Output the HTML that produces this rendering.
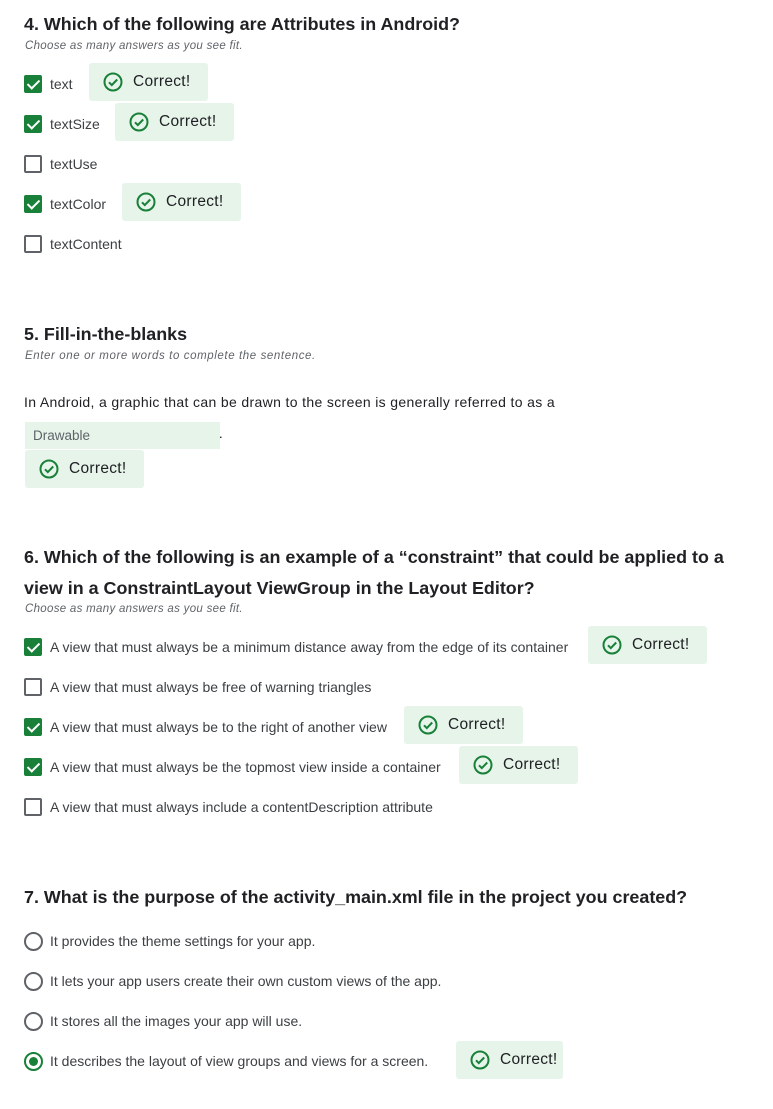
<!DOCTYPE html><html><head><meta charset="utf-8"><style>
body{margin:0;width:773px;height:1109px;background:#fff;position:relative;font-family:"Liberation Sans",sans-serif;overflow:hidden}
.a{position:absolute;white-space:nowrap}
.h{font-size:17.9px;font-weight:bold;color:#202124;line-height:31px}
.s{font-size:11.5px;font-style:italic;color:#5f6368;letter-spacing:0.3px}
.t{font-size:14px;color:#3c4043}
.cb{position:absolute;left:24px;width:18px;height:18px;box-sizing:border-box;border:2px solid #5f6368;border-radius:2px}
.cb.on{background:#188038;border-color:#188038}
.cb.on:after{content:"";position:absolute;left:4px;top:0px;width:5px;height:10px;border:solid #fff;border-width:0 2.5px 2.5px 0;transform:rotate(45deg)}
.rb{position:absolute;left:24px;width:19px;height:19px;box-sizing:border-box;border:2px solid #5f6368;border-radius:50%}
.rb.on{border-color:#188038}
.rb.on:after{content:"";position:absolute;left:3px;top:3px;width:9px;height:9px;border-radius:50%;background:#188038}
.bd{position:absolute;height:38px;width:119px;background:#e6f4ea;border-radius:3px;font-size:15.5px;color:#202124}
.bd svg{position:absolute;left:14px;top:9px}
.bd span{position:absolute;left:44px;top:10px;letter-spacing:0.3px}
</style></head><body>
<div class="a h" style="left:24px;top:9px">4. Which of the following are Attributes in Android?</div>
<div class="a s" style="left:25px;top:40px">Choose as many answers as you see fit.</div>
<div class="cb on" style="top:75px"></div><div class="a t" style="left:50px;top:76px">text</div>
<div class="cb on" style="top:115px"></div><div class="a t" style="left:50px;top:116px">textSize</div>
<div class="cb" style="top:155px"></div><div class="a t" style="left:50px;top:156px">textUse</div>
<div class="cb on" style="top:195px"></div><div class="a t" style="left:50px;top:196px">textColor</div>
<div class="cb" style="top:235px"></div><div class="a t" style="left:50px;top:236px">textContent</div>

<div class="a h" style="left:24px;top:319px">5. Fill-in-the-blanks</div>
<div class="a s" style="left:25px;top:350px;letter-spacing:0.6px">Enter one or more words to complete the sentence.</div>
<div class="a" style="left:24px;top:394px;color:#202124;font-size:14px;letter-spacing:0.35px">In Android, a graphic that can be drawn to the screen is generally referred to as a</div>
<div class="a" style="left:25px;top:422px;width:195px;height:27px;background:#e6f4ea"></div>
<div class="a" style="left:33px;top:428px;font-size:13.5px;color:#5f6368">Drawable</div>
<div class="a" style="left:219px;top:426px;font-size:13px">.</div>

<div class="a h" style="left:24px;top:542px">6. Which of the following is an example of a “constraint” that could be applied to a<br>view in a ConstraintLayout ViewGroup in the Layout Editor?</div>
<div class="a s" style="left:25px;top:603px">Choose as many answers as you see fit.</div>
<div class="cb on" style="top:638px"></div><div class="a t" style="left:50px;top:639px">A view that must always be a minimum distance away from the edge of its container</div>
<div class="cb" style="top:678px"></div><div class="a t" style="left:50px;top:679px">A view that must always be free of warning triangles</div>
<div class="cb on" style="top:718px"></div><div class="a t" style="left:50px;top:719px">A view that must always be to the right of another view</div>
<div class="cb on" style="top:758px"></div><div class="a t" style="left:50px;top:759px">A view that must always be the topmost view inside a container</div>
<div class="cb" style="top:798px"></div><div class="a t" style="left:50px;top:799px">A view that must always include a contentDescription attribute</div>

<div class="a h" style="left:24px;top:882px">7. What is the purpose of the activity_main.xml file in the project you created?</div>
<div class="rb" style="top:932px"></div><div class="a t" style="left:50px;top:933px">It provides the theme settings for your app.</div>
<div class="rb" style="top:972px"></div><div class="a t" style="left:50px;top:973px">It lets your app users create their own custom views of the app.</div>
<div class="rb" style="top:1012px"></div><div class="a t" style="left:50px;top:1013px">It stores all the images your app will use.</div>
<div class="rb on" style="top:1052px"></div><div class="a t" style="left:50px;top:1053px">It describes the layout of view groups and views for a screen.</div>

<svg width="0" height="0" style="position:absolute"><defs><g id="ck"><circle cx="10" cy="10" r="8.5" fill="none" stroke="#188038" stroke-width="2"/><path d="M6 10.3l2.8 2.8 5.4-5.6" fill="none" stroke="#188038" stroke-width="2"/></g></defs></svg>
<div class="bd" style="left:89px;top:63px"><svg width="20" height="20"><use href="#ck"/></svg><span>Correct!</span></div>
<div class="bd" style="left:115px;top:103px"><svg width="20" height="20"><use href="#ck"/></svg><span>Correct!</span></div>
<div class="bd" style="left:122px;top:183px"><svg width="20" height="20"><use href="#ck"/></svg><span>Correct!</span></div>
<div class="bd" style="left:25px;top:450px"><svg width="20" height="20"><use href="#ck"/></svg><span>Correct!</span></div>
<div class="bd" style="left:588px;top:626px"><svg width="20" height="20"><use href="#ck"/></svg><span>Correct!</span></div>
<div class="bd" style="left:404px;top:706px"><svg width="20" height="20"><use href="#ck"/></svg><span>Correct!</span></div>
<div class="bd" style="left:459px;top:746px"><svg width="20" height="20"><use href="#ck"/></svg><span>Correct!</span></div>
<div class="bd" style="left:456px;top:1041px;width:107px"><svg width="20" height="20"><use href="#ck"/></svg><span>Correct!</span></div>
</body></html>
